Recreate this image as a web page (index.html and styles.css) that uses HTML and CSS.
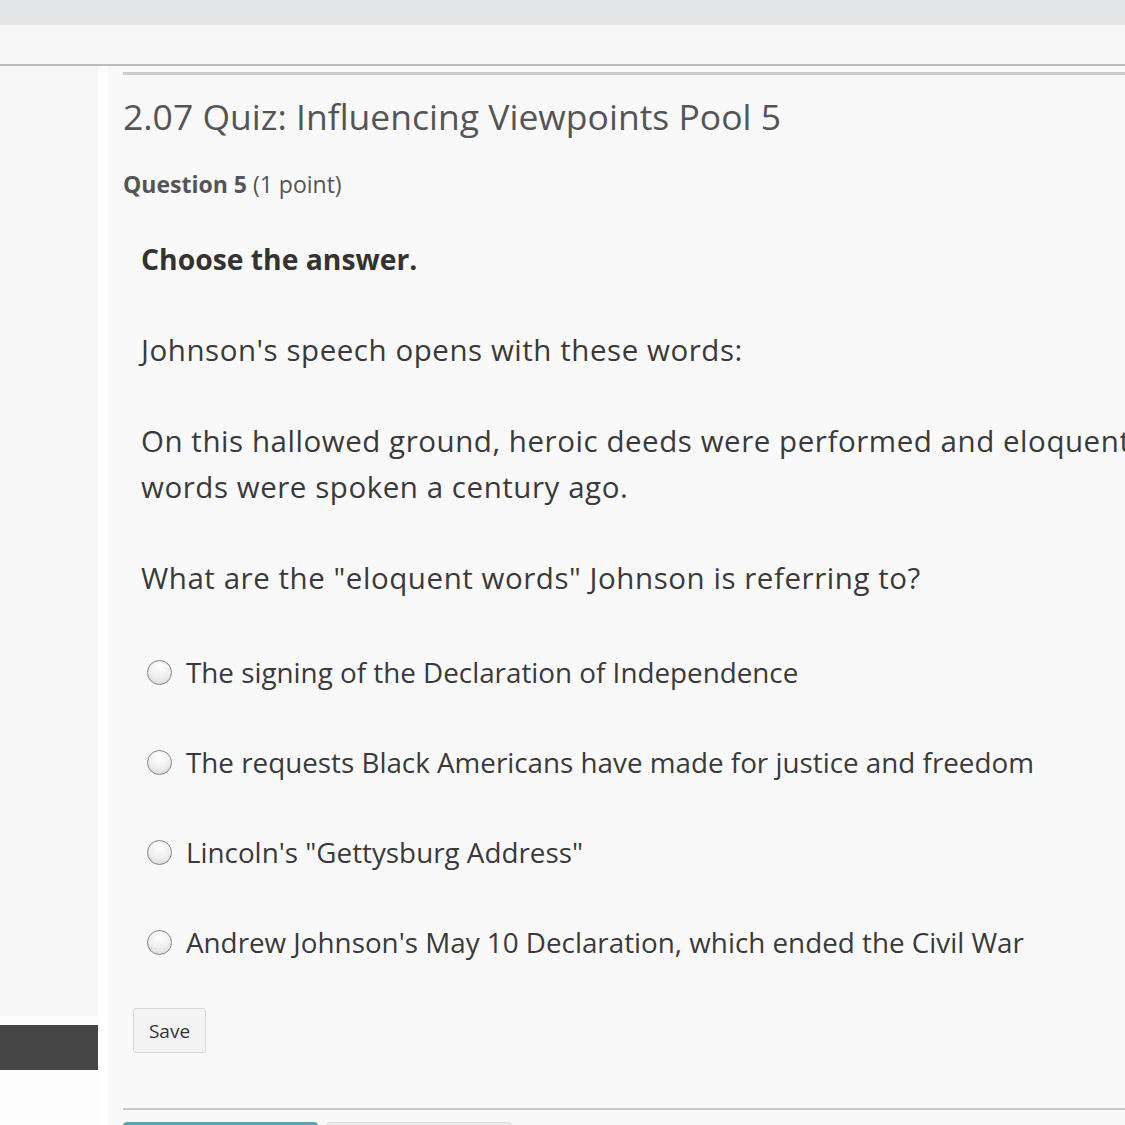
FILE: index.html
```html
<!DOCTYPE html>
<html>
<head>
<meta charset="utf-8">
<link rel="stylesheet" href="styles.css">
</head>
<body>
<div class="topbar"></div>
<div class="subbar"></div>
<div class="layout">
  <aside class="sidebar">
    <div class="side-fill"></div>
    <div class="side-dark"></div>
  </aside>
  <div class="gutter"></div>
  <main class="main">
    <h1 class="title">2.07 Quiz: Influencing Viewpoints Pool 5</h1>
    <div class="qhead"><b>Question 5</b> (1 point)</div>
    <div class="qbody">
      <p class="instr">Choose the answer.</p>
      <p class="txt">Johnson's speech opens with these words:</p>
      <p class="txt">On this hallowed ground, heroic deeds were performed and eloquent words were spoken a century ago.</p>
      <p class="txt">What are the "eloquent words" Johnson is referring to?</p>
      <ul class="options">
        <li class="opt"><span class="radio"></span><span>The signing of the Declaration of Independence</span></li>
        <li class="opt"><span class="radio"></span><span>The requests Black Americans have made for justice and freedom</span></li>
        <li class="opt"><span class="radio"></span><span>Lincoln's "Gettysburg Address"</span></li>
        <li class="opt"><span class="radio"></span><span>Andrew Johnson's May 10 Declaration, which ended the Civil War</span></li>
      </ul>
    </div>
    <button class="save">Save</button>
    <div class="bottom-line"></div>
    <div class="tabs">
      <span class="tab tab-teal"></span>
      <span class="tab tab-grey"></span>
    </div>
  </main>
</div>
</body>
</html>
```
FILE: styles.css
```css
html, body {
  margin: 0;
  padding: 0;
  width: 1125px;
  height: 1125px;
  overflow: hidden;
  background: #f9f9f9;
  font-family: "Open Sans", "Noto Sans", sans-serif;
  color: #3a3a3a;
}
.topbar {
  height: 25px;
  background: #e4e5e7;
}
.subbar {
  height: 39px;
  background: #f6f6f6;
  border-bottom: 2px solid #bcbcbc;
}
.layout {
  display: flex;
  height: 1059px;
}
.sidebar {
  width: 98px;
  flex: none;
  display: flex;
  flex-direction: column;
  background: #fdfdfd;
}
.side-fill {
  height: 950px;
  background: #f6f6f6;
}
.side-dark {
  margin-top: 9px;
  height: 45px;
  background: #464646;
}
.gutter {
  width: 10px;
  flex: none;
  background: #fefefe;
}
.main {
  flex: none;
  width: 1200px;
  padding-left: 15px;
  padding-top: 6px;
  background: #f9f9f9;
  overflow: hidden;
}
.title {
  margin: 0;
  border-top: 3px solid #cacaca;
  padding-top: 16px;
  font-weight: 400;
  font-size: 35.5px;
  line-height: 50px;
  color: #555;
}
.qhead {
  margin-top: 28px;
  font-size: 23px;
  line-height: 30px;
  color: #555;
}
.qhead b { font-weight: 700; }
.qbody {
  padding-left: 18px;
  width: 1000px;
}
.instr {
  margin: 37px 0 0;
  font-weight: 700;
  font-size: 28.3px;
  line-height: 46px;
  color: #333;
}
.txt {
  margin: 45px 0 0;
  font-size: 29.5px;
  letter-spacing: 0.55px;
  line-height: 46px;
  color: #3a3a3a;
}
.options {
  list-style: none;
  margin: 48px 0 0;
  padding: 0;
}
.opt {
  display: flex;
  align-items: center;
  height: 46px;
  margin-bottom: 44px;
  font-size: 27.8px;
  color: #3a3a3a;
}
.radio {
  width: 23px;
  height: 23px;
  margin-left: 6px;
  margin-right: 14px;
  border: 1.5px solid #858585;
  border-radius: 50%;
  background: radial-gradient(circle at 50% 25%, #ffffff 0%, #eeeeee 55%, #d2d2d2 100%);
  flex: none;
}
.save {
  display: block;
  margin: -1px 0 0 10px;
  width: 73px;
  height: 45px;
  border: 1px solid #d8d8d8;
  border-radius: 3px;
  background: #f3f3f3;
  font-family: "Open Sans", sans-serif;
  font-size: 19px;
  color: #333;
  padding: 0;
}
.bottom-line {
  margin-top: 55px;
  height: 2px;
  background: #c8c8c8;
}
.tabs {
  display: flex;
  gap: 8px;
  margin-top: 12px;
}
.tab {
  height: 10px;
  border-radius: 4px 4px 0 0;
}
.tab-teal {
  width: 195px;
  background: #5aa6b6;
}
.tab-grey {
  width: 184px;
  background: #ececec;
  border: 1px solid #dadada;
}
```
